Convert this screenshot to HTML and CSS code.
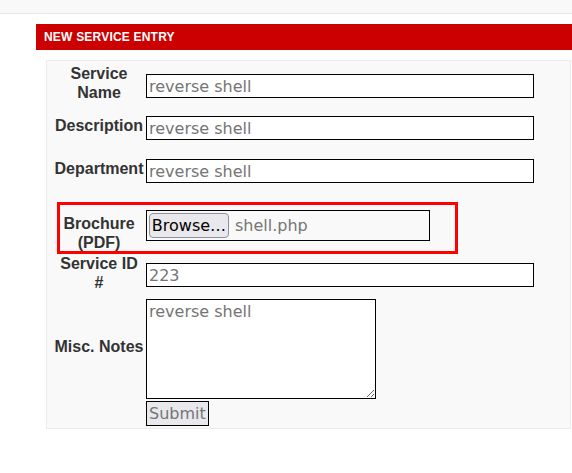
FILE: index.html
```html
<!DOCTYPE html>
<html>
<head>
<meta charset="utf-8">
<link rel="stylesheet" href="styles.css">
</head>
<body>
<div class="topbar"></div>
<main class="main">
  <h2 class="section-title">NEW SERVICE ENTRY</h2>
  <form class="panel">
    <div class="row row-name">
      <label class="label">Service<br>Name</label>
      <div class="field field-name"><input class="text-input" type="text" placeholder="reverse shell"></div>
    </div>
    <div class="row row-desc">
      <label class="label label-single">Description</label>
      <div class="field"><input class="text-input" type="text" placeholder="reverse shell"></div>
    </div>
    <div class="row row-dept">
      <label class="label label-single">Department</label>
      <div class="field"><input class="text-input" type="text" placeholder="reverse shell"></div>
    </div>
    <div class="row row-file">
      <label class="label label-file">Brochure<br>(PDF)</label>
      <div class="file-input">
        <span class="file-button">Browse…</span>
        <span class="file-name">shell.php</span>
      </div>
    </div>
    <div class="row row-id">
      <label class="label">Service ID<br>#</label>
      <div class="field field-id"><input class="text-input" type="text" placeholder="223"></div>
    </div>
    <div class="row row-notes">
      <label class="label label-notes">Misc. Notes</label>
      <textarea class="notes" placeholder="reverse shell"></textarea>
    </div>
    <div class="row row-submit">
      <span></span>
      <div><button type="button" class="submit">Submit</button></div>
    </div>
    <div class="highlight"></div>
  </form>
</main>
</body>
</html>
```

FILE: styles.css
```css
* { box-sizing: border-box; }

html, body {
  margin: 0;
  padding: 0;
  background: #ffffff;
}

body {
  font-family: "Liberation Sans", Arial, sans-serif;
  overflow: hidden;
}

.topbar {
  height: 14px;
  background: #f9f9f9;
  border-bottom: 1px solid #e6e6e6;
}

.main {
  padding: 10px 0 0 36px;
}

.section-title {
  margin: 0;
  height: 26px;
  line-height: 26px;
  padding-left: 8px;
  background: #cc0000;
  color: #ffffff;
  font-size: 12px;
  font-weight: bold;
  letter-spacing: 0.2px;
}

.panel {
  position: relative;
  margin: 10px 1px 0 10px;
  padding: 3px 7px 2px 7px;
  background: #f9f9f9;
  border: 1px solid #ececec;
}

.row {
  display: grid;
  grid-template-columns: 90px auto;
  column-gap: 2px;
  align-items: center;
}

.label {
  color: #333333;
  font-weight: bold;
  font-size: 16px;
  line-height: 19px;
  text-align: center;
  white-space: nowrap;
}

.field {
  padding-top: 8px;
  justify-self: start;
}

.text-input {
  display: block;
  width: 388px;
  height: 24px;
  margin: 0;
  padding: 0 2px;
  border: 1px solid #000000;
  background: #ffffff;
  font-family: "DejaVu Sans", sans-serif;
  font-size: 16px;
  color: #000;
  outline: none;
}

.text-input::placeholder,
.notes::placeholder {
  color: #757575;
  opacity: 1;
}

.row-desc { margin-top: 6px; }
.row-dept { margin-top: 11px; }
.row-file { margin-top: 27px; align-items: start; }
.row-id { margin-top: 2px; align-items: start; }
.row-notes { margin-top: 7px; }
.row-submit { margin-top: 2px; }

.label-single { margin-top: 2px; }
.label-file { margin-top: 4px; }
.label-notes { margin-bottom: 6px; }
.field-name { padding-top: 6px; }
.field-id { padding-top: 9px; }

.file-input {
  display: flex;
  align-items: center;
  gap: 6px;
  width: 284px;
  height: 31px;
  padding: 0 2px;
  border: 1px solid #000000;
  font-family: "DejaVu Sans", sans-serif;
  font-size: 16px;
}

.file-button {
  display: inline-flex;
  align-items: center;
  justify-content: center;
  width: 80px;
  height: 25px;
  border: 1px solid #8f8f9d;
  border-radius: 4px;
  background: #e9e9ed;
  color: #000000;
}

.file-name {
  color: #757575;
}

.notes {
  display: block;
  width: 230px;
  height: 100px;
  margin: 0;
  padding: 2px;
  border: 1px solid #000000;
  background: #ffffff;
  font-family: "DejaVu Sans", sans-serif;
  font-size: 16px;
  resize: both;
  outline: none;
}

.submit {
  display: block;
  height: 25px;
  margin: 0;
  padding: 0 2px;
  border: 1px solid #000000;
  border-radius: 0;
  background: #e9e9ed;
  color: #757575;
  font-family: "DejaVu Sans", sans-serif;
  font-size: 16px;
  line-height: 23px;
}

.highlight {
  position: absolute;
  left: 10px;
  top: 141px;
  width: 401px;
  height: 52px;
  border: 3px solid #ff0000;
  pointer-events: none;
}
```
